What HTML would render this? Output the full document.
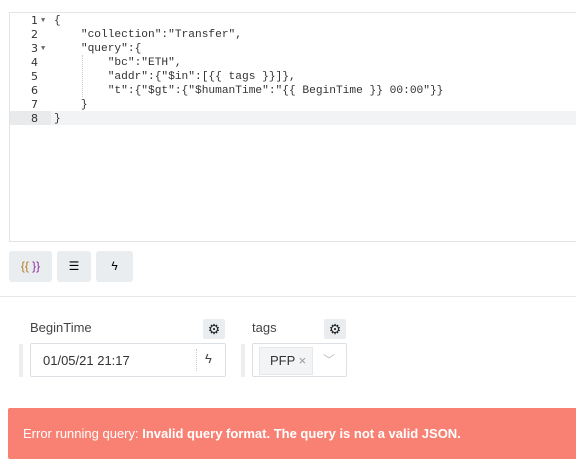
<!DOCTYPE html>
<html><head><style>
body{margin:0;width:576px;height:474px;background:#fff;font-family:"Liberation Sans",sans-serif;position:relative;overflow:hidden}
.ed{position:absolute;left:9px;top:12px;width:580px;height:228px;border:1px solid #e2e5e8;background:#fff}
.ln{position:absolute;left:0;width:567px;height:14px;font:11.2px/14px "Liberation Mono",monospace;color:#333}
.g{position:absolute;left:0;width:28px;text-align:right;color:#333;font-family:"DejaVu Sans",sans-serif;font-size:11px}
.g2{position:absolute;left:31px;font-size:7px;color:#666}
.c{position:absolute;left:44px;white-space:pre}
.k{color:#333}
.btn{position:absolute;top:251px;height:31px;background:#e9edf0;border-radius:3px;font-size:12px;text-align:center;line-height:31px}
.lbl{position:absolute;top:320px;font-size:13px;color:#444}
.gear{position:absolute;top:319px;width:22px;height:20px;background:#e9edf0;border-radius:2px;text-align:center;font-size:14px;line-height:20px;color:#222}
.inp{position:absolute;top:343px;height:32px;border:1px solid #dcdfe3;border-radius:2px;background:#fff}
.dots{position:absolute;top:344px;width:4px;height:33px;background-image:radial-gradient(#bbb 0.6px,transparent 0.7px);background-size:2px 2px}
</style></head><body>
<div class="ed">
<div style="position:absolute;left:0;top:98px;width:41px;height:14px;background:#e8eaec"></div>
<div style="position:absolute;left:41px;top:98px;width:540px;height:14px;background:#f1f3f5"></div>
<div style="position:absolute;left:72px;top:42px;height:42px;border-left:1px dotted #ccc"></div>
<div class="ln" style="top:1px"><span class="g">1</span><span class="g2">▼</span><span class="c">{</span></div>
<div class="ln" style="top:15px"><span class="g">2</span><span class="c">    "collection":"Transfer",</span></div>
<div class="ln" style="top:29px"><span class="g">3</span><span class="g2">▼</span><span class="c">    "query":{</span></div>
<div class="ln" style="top:43px"><span class="g">4</span><span class="c">        "bc":"ETH",</span></div>
<div class="ln" style="top:57px"><span class="g">5</span><span class="c">        "addr":{"$in":[{{ tags }}]},</span></div>
<div class="ln" style="top:71px"><span class="g">6</span><span class="c">        "t":{"$gt":{"$humanTime":"{{ BeginTime }} 00:00"}}</span></div>
<div class="ln" style="top:85px"><span class="g">7</span><span class="c">    }</span></div>
<div class="ln" style="top:99px"><span class="g">8</span><span class="c">}</span></div>
</div>
<div class="btn" style="left:9px;width:43px;color:#b07a20">{{ <span style="color:#8a2b9a">}}</span></div>
<div class="btn" style="left:57px;width:34px">☰</div>
<div class="btn" style="left:96px;width:37px">ϟ</div>
<div style="position:absolute;left:0;top:296px;width:576px;height:1px;background:#e6e8ea"></div>
<div class="lbl" style="left:30px">BeginTime</div>
<div class="gear" style="left:203px">⚙</div>
<div class="lbl" style="left:252px">tags</div>
<div class="gear" style="left:324px">⚙</div>
<div class="dots" style="left:19px"></div>
<div class="dots" style="left:241px"></div>
<div class="inp" style="left:30px;width:194px"><span style="position:absolute;left:12px;top:9px;font-size:13px;color:#333">01/05/21 21:17</span><span style="position:absolute;left:165px;top:5px;height:22px;border-left:1px dotted #ccc"></span><span style="position:absolute;left:174px;top:7px;font-size:13px;color:#444">ϟ</span></div>
<div class="inp" style="left:252px;width:93px"><span style="position:absolute;left:6px;top:3px;width:52px;height:26px;background:#f3f4f5;border:1px solid #e6e8ea;font-size:13px;line-height:26px;color:#333;text-indent:10px">PFP <span style="color:#999">×</span></span><span style="position:absolute;left:70px;top:7px;color:#bbb;font-size:12px">﹀</span></div>
<div style="position:absolute;left:8px;top:408px;width:570px;height:51px;background:#f98174;border-radius:2px;color:#fff;font-size:13px;line-height:51px;text-indent:15px">Error running query: <b style="font-weight:600">Invalid query format. The query is not a valid JSON.</b></div>
</body></html>
